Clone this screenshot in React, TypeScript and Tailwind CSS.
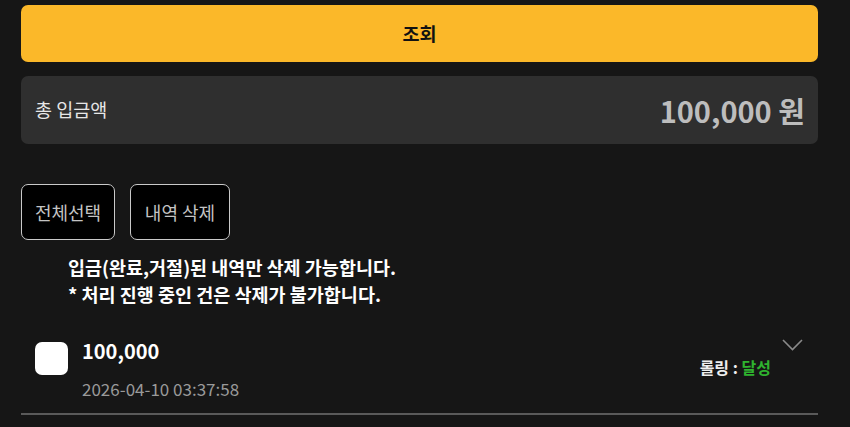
import React from "react";

export default function App() {
  return (
    <div
      className="w-[850px] h-[427px] overflow-hidden bg-[#161616] text-white"
      style={{ fontFamily: '"Noto Sans CJK KR", "Noto Sans", sans-serif' }}
    >
      <div className="pl-[21px] pr-[32px] pt-[5px]">
        <button className="w-full h-[57px] rounded-[7px] bg-[#fbb829] text-[#111] text-[18.5px] font-bold flex items-center justify-center">
          조회
        </button>

        <div className="mt-[14px] h-[68px] rounded-[7px] bg-[#2f2f2f] flex items-center justify-between pl-[14px] pr-[13px]">
          <span className="text-[18.5px] text-[#e6e6e6]">총 입금액</span>
          <span className="text-[29px] font-bold text-[#bdbdbd] leading-none">100,000 원</span>
        </div>

        <div className="mt-[40px] flex gap-[15px]">
          <button className="w-[94px] h-[56px] rounded-[7px] bg-black border border-[#c9c9c9] text-[18px] text-[#c4c4c4] flex items-center justify-center">
            전체선택
          </button>
          <button className="w-[100px] h-[56px] rounded-[7px] bg-black border border-[#c9c9c9] text-[18px] text-[#c4c4c4] flex items-center justify-center">
            내역 삭제
          </button>
        </div>

        <div className="mt-[14px] pl-[47px] text-[18.5px] font-bold leading-[27px] text-white">
          <p>입금(완료,거절)된 내역만 삭제 가능합니다.</p>
          <p>* 처리 진행 중인 건은 삭제가 불가합니다.</p>
        </div>

        <div className="mt-[25px] h-[82px] border-b-2 border-[#5a5a5a] flex pl-[14px] pr-[15px]">
          <div className="mt-[9px] w-[33px] h-[33px] rounded-[7px] bg-white shrink-0" />
          <div className="ml-[14px] flex flex-col">
            <span className="mt-[6px] text-[20px] font-bold leading-[24px] text-white">100,000</span>
            <span className="mt-[15px] text-[17px] leading-[22px] text-[#9a9a9a]">2026-04-10 03:37:58</span>
          </div>
          <div className="ml-auto flex items-start">
            <span className="mt-[24px] text-[16px] font-bold leading-[20px] text-[#eeeeee]">
              롤링 : <span className="text-[#2fb32f]">달성</span>
            </span>
            <svg className="ml-[11px] mt-[6px]" width="21" height="12" viewBox="0 0 21 12" fill="none">
              <polyline points="1,1 10.5,10.5 20,1" stroke="#8a8a8a" strokeWidth="1.6" fill="none" />
            </svg>
          </div>
        </div>
      </div>
    </div>
  );
}
